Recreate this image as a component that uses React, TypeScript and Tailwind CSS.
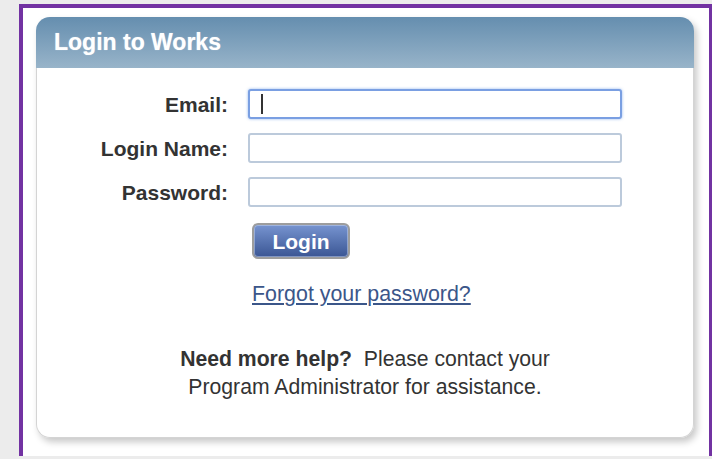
import React from "react";

const font = { fontFamily: '"Liberation Sans", Arial, sans-serif' };

export default function App() {
  return (
    <div className="w-[712px] h-[459px] bg-[#ececec] pl-[19px] pt-[4px] overflow-hidden" style={font}>
      <div className="h-[452px] bg-white border-t-4 border-l-4 border-r-[3px] border-[#7232a2] pl-[13px] pt-[9px] pr-[15px]">
        <LoginPanel />
      </div>
    </div>
  );
}

function LoginPanel() {
  return (
    <div className="w-[658px] rounded-[14px] bg-white shadow-[3px_4px_7px_rgba(0,0,0,0.22)]">
      <div className="h-[51px] rounded-t-[14px] bg-linear-to-b from-[#658eaf] to-[#98b4c9] flex items-center pl-[18px]">
        <h1 className="text-[23px] font-bold text-white [text-shadow:0_0_1px_rgba(255,255,255,0.6)]">Login to Works</h1>
      </div>
      <div className="h-[370px] rounded-b-[14px] border-x border-b border-[#d4d4d4] pt-[21px] flex flex-col">
        <div className="grid grid-cols-[191px_374px] gap-x-[20px] gap-y-[14px] items-center">
          <Field label="Email:" focused />
          <Field label="Login Name:" />
          <Field label="Password:" type="password" />
        </div>
        <div className="pl-[215px] mt-[16px]">
          <button className="w-[98px] h-[36px] rounded-[6px] border-2 border-[#9d9d9d] bg-linear-to-b from-[#7794d0] to-[#3b5694] shadow-[inset_0_0_0_1px_rgba(200,214,240,0.5)] text-white text-[21px] font-bold leading-none">
            Login
          </button>
        </div>
        <div className="pl-[215px] mt-[23px]">
          <a href="#" className="text-[21.4px] leading-[24px] text-[#3b5689] underline underline-offset-2">
            Forgot your password?
          </a>
        </div>
        <p className="mt-[37px] text-center text-[21.2px] leading-[28px] text-[#333]">
          <b>Need more help?</b>&nbsp; Please contact your
          <br />
          Program Administrator for assistance.
        </p>
      </div>
    </div>
  );
}

function Field({ label, focused, type = "text" }: { label: string; focused?: boolean; type?: string }) {
  return (
    <>
      <label className="text-right text-[21px] font-bold text-[#333] leading-none">{label}</label>
      <div className="relative">
        <input
          type={type}
          className={
            focused
              ? "w-[374px] h-[30px] rounded-[3px] border-2 border-[#7a9fe2] shadow-[0_0_3px_rgba(100,150,230,0.7)] outline-none bg-white"
              : "w-[374px] h-[30px] rounded-[3px] border-2 border-[#bccadb] outline-none bg-white"
          }
        />
        {focused && <span className="absolute left-[13px] top-[5px] w-[2px] h-[20px] bg-[#333]" />}
      </div>
    </>
  );
}
